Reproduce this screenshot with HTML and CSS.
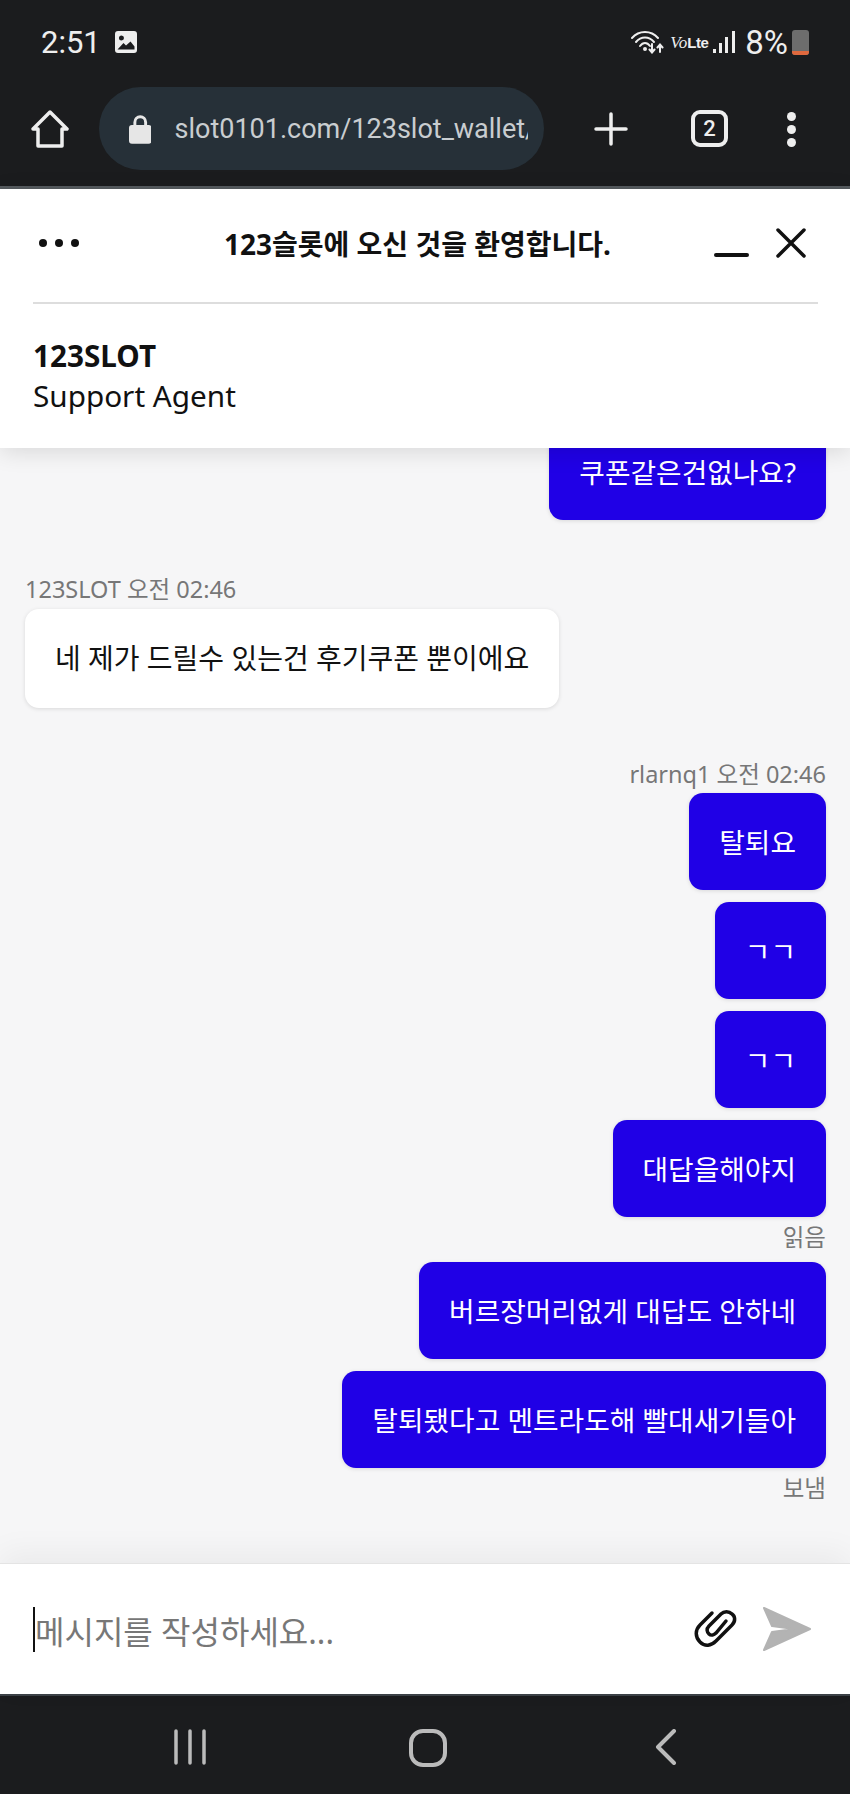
FILE: index.html
```html
<!DOCTYPE html>
<html lang="ko">
<head>
  <meta charset="UTF-8">
  <meta name="viewport" content="width=device-width, initial-scale=1.0">
  <title>123슬롯</title>
  <link rel="stylesheet" href="styles.css">
</head>
<body>
  <div class="status-bar">
    <div class="status-left">
      <span class="clock">2:51</span>
      <svg class="icon-picture" width="22" height="22" viewBox="0 0 22 22">
        <path fill="#eee" fill-rule="evenodd" d="M3 0h16a3 3 0 0 1 3 3v16a3 3 0 0 1-3 3H3a3 3 0 0 1-3-3V3a3 3 0 0 1 3-3zM2.500 18.500h17v-3l-4-5-4.500 4-2.500-2.500zM6.500 4.500a2.500 2.500 0 1 0 0 5 2.500 2.500 0 0 0 0-5z"/>
      </svg>
    </div>
    <div class="status-right">
      <svg width="33" height="24" viewBox="0 0 33 24" fill="none" stroke="#eee" stroke-width="2" stroke-linecap="round">
        <path d="M1 8C8 0 20 0 27 8"/>
        <path d="M5 12C10 6 18 6 23 12"/>
        <path d="M9 16C12 12 16 12 19 16"/>
        <circle cx="14" cy="19" r="1" fill="#eee"/>
        <path d="M21 14v8M18.500 19.500l2.500 3 2.500-3M29 22v-7M26.500 17.500l2.500-3 2.500 3"/>
      </svg>
      <span class="volte"><i>Vo</i><b>Lte</b></span>
      <svg class="icon-signal" width="22" height="23" viewBox="0 0 22 23" fill="#eee">
        <rect x="0" y="18" width="3" height="4"/>
        <rect x="6" y="12" width="3" height="10"/>
        <rect x="12" y="6" width="3" height="16"/>
        <rect x="19" y="0" width="3" height="22"/>
      </svg>
      <span class="battery-text">8%</span>
      <div class="battery"><div class="battery-level"></div></div>
    </div>
  </div>

  <div class="toolbar">
    <svg class="icon-home" width="38" height="38" viewBox="0 0 38 38" fill="none" stroke="#eee" stroke-width="3.500" stroke-linejoin="round" stroke-linecap="round">
      <path d="M2 19L19 2l17 17h-5v17H7V19z"/>
    </svg>
    <div class="url-pill">
      <svg width="23" height="30" viewBox="0 0 23 30">
        <path fill="none" stroke="#e6e6e6" stroke-width="3" d="M6 14V8a5.500 5.500 0 0 1 11 0v6"/>
        <rect x="0" y="11" width="23" height="19" rx="3" fill="#e6e6e6"/>
      </svg>
      <span class="url-text">slot0101.com/123slot_wallet/</span>
    </div>
    <svg class="icon-plus" width="34" height="34" viewBox="0 0 34 34" stroke="#eee" stroke-width="3.500" stroke-linecap="round">
      <path d="M17 2v30M2 17h30"/>
    </svg>
    <div class="tabs-count">2</div>
    <div class="menu-dots"><span></span><span></span><span></span></div>
  </div>

  <div class="chat-header">
    <div class="chat-title-row">
      <div class="more-dots"><span></span><span></span><span></span></div>
      <div class="chat-title">123슬롯에 오신 것을 환영합니다.</div>
      <div class="minimize"></div>
      <svg class="icon-close" width="30" height="30" viewBox="0 0 30 30" stroke="#111" stroke-width="3.500" stroke-linecap="round">
        <path d="M2 2l26 26M28 2L2 28"/>
      </svg>
    </div>
    <div class="agent">
      <div class="agent-name">123SLOT</div>
      <div class="agent-role">Support Agent</div>
    </div>
  </div>

  <div class="messages">
    <div class="bubble mine">쿠폰같은건없나요?</div>

    <div class="meta first">123SLOT 오전 02:46</div>
    <div class="bubble theirs">네 제가 드릴수 있는건 후기쿠폰 뿐이에요</div>

    <div class="meta right second">rlarnq1 오전 02:46</div>
    <div class="bubble mine">탈퇴요</div>
    <div class="bubble mine">ㄱㄱ</div>
    <div class="bubble mine">ㄱㄱ</div>
    <div class="bubble mine">대답을해야지</div>
    <div class="meta right status">읽음</div>
    <div class="bubble mine">버르장머리없게 대답도 안하네</div>
    <div class="bubble mine">탈퇴됐다고 멘트라도해 빨대새기들아</div>
    <div class="meta right status">보냄</div>
  </div>

  <div class="composer">
    <div class="composer-input"><span class="placeholder">메시지를 작성하세요...</span></div>
    <svg class="icon-clip" width="44" height="40" viewBox="0 0 44 40" fill="none" stroke="#111" stroke-width="3.500" stroke-linecap="round">
      <path d="M18 4L6 16C1 21 1 28 6 33C11 38 17 37 22 32L38 16C42 12 41 7 38 5C35 2 30 2 27 5L15 17C12 20 13 23 15 25C17 27 20 26 22 24L32 12"/>
    </svg>
    <svg class="icon-send" width="48" height="44" viewBox="0 0 48 44" fill="#b3b3b3" stroke="#b3b3b3" stroke-width="2" stroke-linejoin="round">
      <path d="M1 1L47 22L1 43L9 25L31 22L9 19z"/>
    </svg>
  </div>

  <div class="nav-bar">
    <div class="nav-cell">
      <svg width="32" height="36" viewBox="0 0 32 36" stroke="#bbb" stroke-width="3.500" stroke-linecap="round">
        <path d="M2 2v32M16 2v32M30 2v32"/>
      </svg>
    </div>
    <div class="nav-cell">
      <svg width="38" height="38" viewBox="0 0 38 38" fill="none" stroke="#bbb" stroke-width="4">
        <rect x="2" y="2" width="34" height="34" rx="12"/>
      </svg>
    </div>
    <div class="nav-cell">
      <svg width="22" height="36" viewBox="0 0 22 36" fill="none" stroke="#bbb" stroke-width="4" stroke-linecap="round" stroke-linejoin="round">
        <path d="M19 2L3 18l16 16"/>
      </svg>
    </div>
  </div>
</body>
</html>
```

FILE: styles.css
```css
* {
  box-sizing: border-box;
}

body {
  font-family: "Noto Sans", "Noto Sans CJK KR", sans-serif;
  margin: 0;
  padding: 0;
  width: 850px;
  height: 1794px;
  overflow: hidden;
  display: flex;
  flex-direction: column;
  background-color: #f6f6f7;
  color: #111;
}

/* phone status bar */
.status-bar {
  height: 87px;
  flex-shrink: 0;
  background-color: #1b1c1e;
  display: flex;
  justify-content: space-between;
  align-items: flex-start;
  padding: 22px 41px 0 41px;
  color: #eee;
}

.status-left,
.status-right {
  display: flex;
  align-items: center;
  height: 40px;
}

.clock {
  font-family: Roboto, sans-serif;
  font-size: 31px;
}

.icon-picture {
  margin-left: 14px;
}

.volte {
  margin-left: 6px;
  width: 36px;
  white-space: nowrap;
}

.volte i {
  font-family: "Liberation Serif", serif;
  font-size: 17px;
}

.volte b {
  font-family: "Liberation Sans", sans-serif;
  font-size: 15px;
  letter-spacing: -0.5px;
}

.icon-signal {
  margin-left: 7px;
}

.battery-text {
  font-family: Roboto, sans-serif;
  font-size: 33px;
  margin-left: 10px;
}

.battery {
  width: 17px;
  height: 25px;
  margin-left: 4px;
  background-color: #6d6d6d;
  border-radius: 3px;
  display: flex;
  align-items: flex-end;
  overflow: hidden;
}

.battery-level {
  width: 100%;
  height: 4px;
  background-color: #e0693e;
}

/* browser toolbar */
.toolbar {
  height: 102px;
  flex-shrink: 0;
  background-color: #1b1c1e;
  border-bottom: 3px solid #565b5f;
  display: flex;
  align-items: flex-start;
  padding-left: 31px;
}

.icon-home {
  margin-top: 23px;
}

.url-pill {
  width: 445px;
  height: 83px;
  margin-left: 30px;
  padding: 0 16px 0 30px;
  background-color: #263038;
  border-radius: 42px;
  display: flex;
  align-items: center;
  overflow: hidden;
}

.url-text {
  margin-left: 23px;
  font-family: Roboto, sans-serif;
  font-size: 27px;
  color: #c9cdd0;
  white-space: nowrap;
  overflow: hidden;
}

.icon-plus {
  margin: 25px 0 0 50px;
}

.tabs-count {
  width: 37px;
  height: 37px;
  margin: 23px 0 0 63px;
  border: 4px solid #eee;
  border-radius: 9px;
  font-family: Roboto, sans-serif;
  font-size: 22px;
  line-height: 29px;
  font-weight: 500;
  text-align: center;
  color: #eee;
}

.menu-dots {
  margin: 25px 0 0 59px;
  display: flex;
  flex-direction: column;
  gap: 4px;
}

.menu-dots span {
  width: 9px;
  height: 9px;
  border-radius: 50%;
  background-color: #eee;
}

/* chat header */
.chat-header {
  height: 259px;
  flex-shrink: 0;
  padding: 0 32px 0 33px;
  background-color: #fff;
  box-shadow: 0 4px 22px rgba(0, 0, 0, 0.12);
  position: relative;
  z-index: 2;
}

.chat-title-row {
  height: 115px;
  border-bottom: 2px solid #ddd;
  display: flex;
  align-items: center;
  padding: 0 12px 5px 6px;
}

.more-dots {
  display: flex;
  gap: 8px;
}

.more-dots span {
  width: 8px;
  height: 8px;
  border-radius: 50%;
  background-color: #111;
}

.chat-title {
  margin-left: 145px;
  width: 490px;
  font-size: 28px;
  font-weight: 700;
  white-space: nowrap;
}

.minimize {
  width: 35px;
  height: 4px;
  margin-top: 24px;
  background-color: #111;
  border-radius: 2px;
}

.icon-close {
  margin-left: 27px;
}

.agent {
  padding-top: 32px;
}

.agent-name {
  font-size: 29.700px;
  line-height: 40px;
  font-weight: 700;
}

.agent-role {
  font-size: 29.700px;
  line-height: 40px;
}

/* messages */
.messages {
  flex: 1;
  min-height: 0;
  overflow: hidden;
  display: flex;
  flex-direction: column;
  justify-content: flex-end;
  align-items: flex-start;
  padding: 0 24px 50px 25px;
}

.bubble {
  height: 97px;
  flex-shrink: 0;
  padding: 0 30px;
  border-radius: 14px;
  font-size: 27.800px;
  line-height: 99px;
  white-space: nowrap;
  box-shadow: 0 1px 4px rgba(0, 0, 0, 0.12);
}

.bubble.mine {
  align-self: flex-end;
  background-color: #2000e6;
  color: #fff;
  margin-bottom: 12px;
}

.bubble.theirs {
  height: 99px;
  font-size: 28px;
  background-color: #fff;
  color: #111;
}

.meta {
  flex-shrink: 0;
  font-size: 23.500px;
  line-height: 34px;
  color: #777;
}

.meta.right {
  align-self: flex-end;
}

.meta.first {
  margin-top: 40px;
  margin-bottom: 3px;
}

.meta.second {
  margin-top: 49px;
  margin-bottom: 2px;
}

.meta.status {
  margin-top: -9px;
  margin-bottom: 8px;
}

/* composer */
.composer {
  height: 131px;
  flex-shrink: 0;
  background-color: #fff;
  border-top: 1px solid #e4e4e4;
  box-shadow: 0 -10px 30px rgba(0, 0, 0, 0.05);
  display: flex;
  align-items: center;
  padding: 0 39px 0 33px;
  position: relative;
}

.composer-input {
  flex: 1;
  height: 45px;
  border-left: 2px solid #111;
  font-size: 32px;
  line-height: 50px;
}

.placeholder {
  color: #777;
}

.icon-clip {
  margin-right: 25px;
}

/* phone nav buttons */
.nav-bar {
  height: 100px;
  flex-shrink: 0;
  background-color: #1b1c1e;
  border-top: 2px solid #3c4247;
  display: flex;
  justify-content: center;
  padding: 33px 0 0 6px;
}

.nav-cell {
  width: 238px;
  display: flex;
  justify-content: center;
  align-items: flex-start;
}
```
